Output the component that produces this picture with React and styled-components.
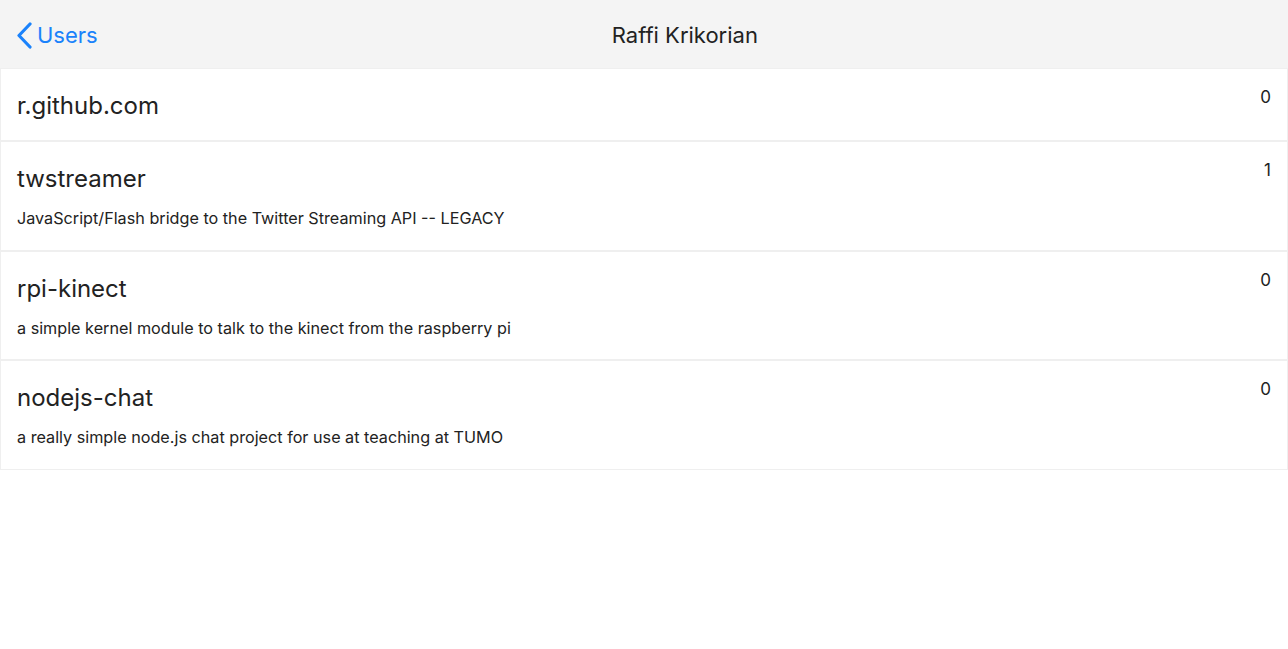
import React from 'react';
import styled, { createGlobalStyle } from 'styled-components';

const GlobalStyle = createGlobalStyle`
  html, body {
    margin: 0;
    padding: 0;
    background: #fff;
    font-family: Inter, "Noto Sans", sans-serif;
    color: #222;
  }
`;

const Page = styled.div`
  width: 100%;
  min-height: 100vh;
  background: #fff;
`;

const NavBar = styled.header`
  height: 68px;
  background: #f4f4f4;
  display: flex;
  align-items: center;
  padding: 2px 16px 0;
  box-sizing: border-box;
`;

const BackButton = styled.button`
  display: flex;
  align-items: center;
  gap: 4px;
  border: none;
  background: none;
  padding: 0;
  color: #1a82fb;
  font-family: inherit;
  font-size: 22px;
  cursor: pointer;
`;

const NavTitle = styled.h1`
  flex: 1;
  margin: 0;
  text-align: center;
  font-size: 22px;
  font-weight: 400;
  color: #222;
`;

const List = styled.ul`
  list-style: none;
  margin: 0;
  padding: 0;
`;

const Row = styled.li`
  display: flex;
  justify-content: space-between;
  align-items: flex-start;
  border: 1px solid #efefef;
  padding: 16px 16px 13px;
  background: #fff;
`;

const RowMain = styled.div`
  display: flex;
  flex-direction: column;
`;

const RepoName = styled.div`
  font-size: 24px;
  line-height: 42px;
  color: #222;
`;

const RepoDesc = styled.div`
  font-size: 16.2px;
  line-height: 20px;
  margin-top: 8px;
  margin-bottom: 8.5px;
  color: #222;
`;

const Count = styled.span`
  font-size: 17px;
  line-height: 20px;
  margin-top: 2px;
  color: #222;
`;

const repos = [
  { name: 'r.github.com', count: 0 },
  { name: 'twstreamer', desc: 'JavaScript/Flash bridge to the Twitter Streaming API -- LEGACY', count: 1 },
  { name: 'rpi-kinect', desc: 'a simple kernel module to talk to the kinect from the raspberry pi', count: 0 },
  { name: 'nodejs-chat', desc: 'a really simple node.js chat project for use at teaching at TUMO', count: 0 },
];

const Chevron = () => (
  <svg width="17" height="27" viewBox="0 0 17 27" fill="none">
    <path d="M14 2 L3 13.5 L14 25" stroke="#1a82fb" strokeWidth="3.2" strokeLinecap="round" strokeLinejoin="round" />
  </svg>
);

export default function App() {
  return (
    <Page>
      <GlobalStyle />
      <NavBar>
        <BackButton>
          <Chevron />
          Users
        </BackButton>
        <NavTitle>Raffi Krikorian</NavTitle>
      </NavBar>
      <List>
        {repos.map((repo) => (
          <Row key={repo.name}>
            <RowMain>
              <RepoName>{repo.name}</RepoName>
              {repo.desc && <RepoDesc>{repo.desc}</RepoDesc>}
            </RowMain>
            <Count>{repo.count}</Count>
          </Row>
        ))}
      </List>
    </Page>
  );
}
